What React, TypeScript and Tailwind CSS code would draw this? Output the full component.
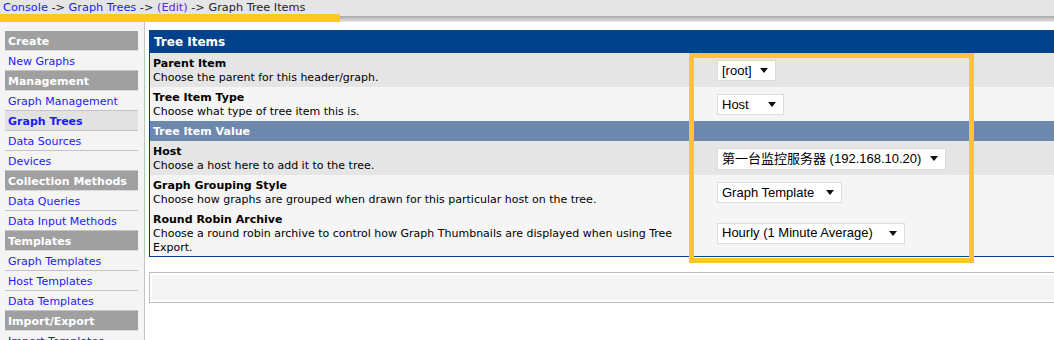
import React from 'react';

type NavItem = { label: string; head?: boolean; active?: boolean };

const nav: NavItem[] = [
  { label: 'Create', head: true },
  { label: 'New Graphs' },
  { label: 'Management', head: true },
  { label: 'Graph Management' },
  { label: 'Graph Trees', active: true },
  { label: 'Data Sources' },
  { label: 'Devices' },
  { label: 'Collection Methods', head: true },
  { label: 'Data Queries' },
  { label: 'Data Input Methods' },
  { label: 'Templates', head: true },
  { label: 'Graph Templates' },
  { label: 'Host Templates' },
  { label: 'Data Templates' },
  { label: 'Import/Export', head: true },
  { label: 'Import Templates' },
];

function FakeSelect({ value, width, tall }: { value: string; width: number; tall?: boolean }) {
  return (
    <div
      className={`flex items-center justify-between border border-[#dcdcdc] bg-white pl-[4px] pr-[7px] text-[13px] text-black [font-family:'Liberation_Sans','Noto_Sans_CJK_SC',sans-serif] ${
        tall ? 'h-[22px]' : 'h-[21px]'
      }`}
      style={{ width }}
    >
      <span className="whitespace-nowrap">{value}</span>
      <svg width="8" height="5" viewBox="0 0 8 5" className="shrink-0">
        <path d="M0 0h8L4 5z" fill="#111" />
      </svg>
    </div>
  );
}

type Row = { label: string; desc: string; value: string; width: number; bg: string; h: string; tall?: boolean };

const rowsTop: Row[] = [
  { label: 'Parent Item', desc: 'Choose the parent for this header/graph.', value: '[root]', width: 59, bg: 'bg-[#e5e5e5]', h: 'h-[34px]' },
  { label: 'Tree Item Type', desc: 'Choose what type of tree item this is.', value: 'Host', width: 67, bg: 'bg-[#f5f5f5]', h: 'h-[34px]' },
];

const rowsBottom: Row[] = [
  { label: 'Host', desc: 'Choose a host here to add it to the tree.', value: '第一台监控服务器 (192.168.10.20)', width: 229, bg: 'bg-[#e5e5e5]', h: 'h-[34px]', tall: true },
  { label: 'Graph Grouping Style', desc: 'Choose how graphs are grouped when drawn for this particular host on the tree.', value: 'Graph Template', width: 125, bg: 'bg-[#f5f5f5]', h: 'h-[34px]' },
  { label: 'Round Robin Archive', desc: 'Choose a round robin archive to control how Graph Thumbnails are displayed when using Tree Export.', value: 'Hourly (1 Minute Average)', width: 188, bg: 'bg-[#f5f5f5]', h: 'h-[47px]' },
];

function FormRow({ row }: { row: Row }) {
  return (
    <div className={`flex ${row.bg} ${row.h}`}>
      <div className="w-[540px] shrink-0 px-[3px] pt-[4px] text-[11px] leading-[14px] text-black">
        <div className="font-bold">{row.label}</div>
        <div>{row.desc}</div>
      </div>
      <div className="flex items-center pl-[27px] pt-[1px]">
        <FakeSelect value={row.value} width={row.width} tall={row.tall} />
      </div>
    </div>
  );
}

export default function App() {
  return (
    <div className="relative h-[340px] w-full overflow-hidden bg-white [font-family:'DejaVu_Sans',Verdana,sans-serif]">
      {/* breadcrumb bar */}
      <div className="h-[16px] bg-[#e5e5e5] pl-[3px] text-[11.3px] leading-[16px] text-[#222]">
        <span className="text-[#1a1aff]">Console</span> -&gt; <span className="text-[#1a1aff]">Graph Trees</span> -&gt;{' '}
        <span className="text-[#5b28d8]">(Edit)</span> -&gt; Graph Tree Items
      </div>
      <div className="h-[6px] bg-gradient-to-b from-[#a8a8a8] to-[#e8e8e8]" />

      <div className="flex">
        {/* sidebar */}
        <div className="h-[318px] w-[145px] shrink-0 border-r border-[#c4c4c4] bg-[#f4f4f4] pl-[5px] pr-[6px] pt-[9px]">
          {nav.map((item) =>
            item.head ? (
              <div
                key={item.label}
                className="h-[20px] border-b border-[#d8d8d8] bg-[#a0a0a0] pl-[3px] text-[11px] font-bold leading-[21px] text-white"
              >
                {item.label}
              </div>
            ) : (
              <div
                key={item.label}
                className={`h-[20px] border-b border-[#c4c4c4] pl-[3px] text-[11px] leading-[21px] text-[#1a1aff] ${
                  item.active ? 'bg-[#e2e2e2] font-bold' : ''
                }`}
              >
                {item.label}
              </div>
            )
          )}
        </div>

        {/* main */}
        <div className="w-[930px] shrink-0 pl-[4px] pt-[8px]">
          <div className="border border-[#00438c]">
            <div className="h-[22px] bg-[#00438c] pl-[4px] text-[12px] font-bold leading-[23px] text-white">Tree Items</div>
            {rowsTop.map((r) => (
              <FormRow key={r.label} row={r} />
            ))}
            <div className="h-[20px] bg-[#6d88ad] pl-[3px] text-[11px] font-bold leading-[21px] text-white">Tree Item Value</div>
            {rowsBottom.map((r) => (
              <FormRow key={r.label} row={r} />
            ))}
          </div>

          <div className="mt-[15px] border border-[#bcbcbc] bg-white p-[2px]">
            <div className="h-[25px] bg-[#f4f4f4]" />
          </div>
        </div>
      </div>

      {/* annotation overlays */}
      <div className="absolute left-0 top-[14px] h-[8px] w-[340px] bg-[#fec62b]" />
      <div className="absolute left-[689px] top-[53px] h-[210px] w-[285px] border-[5px] border-[#fec62b]" />
    </div>
  );
}
